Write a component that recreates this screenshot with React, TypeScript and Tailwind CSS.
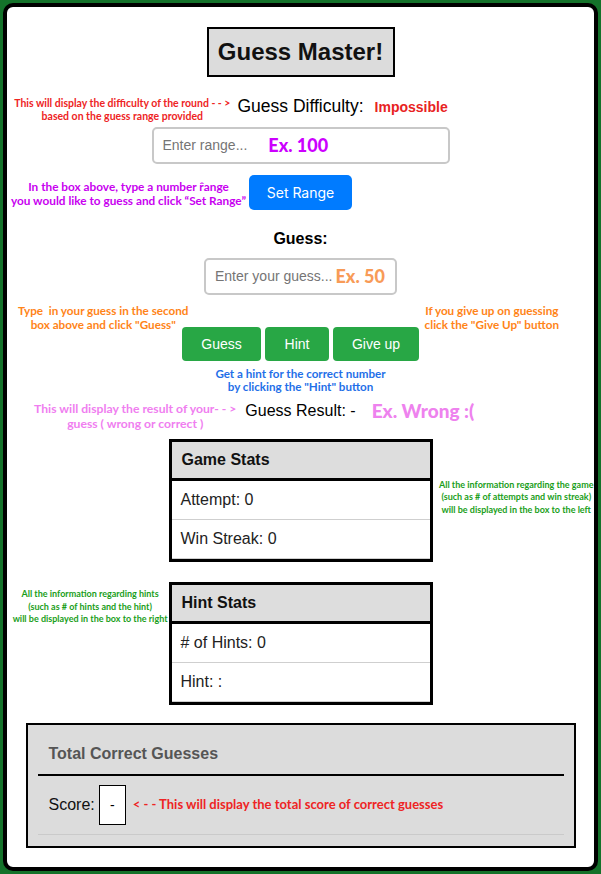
import React from "react";

const note = "font-['Lato',sans-serif] font-bold whitespace-nowrap text-center";
const arial = "font-['Liberation_Sans',Arial,sans-serif]";
const row3 = "grid w-full grid-cols-[minmax(0,1fr)_auto_minmax(0,1fr)]";

function StatBox({ title, rows }: { title: string; rows: string[] }) {
  return (
    <div className={`w-[264px] border-[3px] border-black bg-white ${arial}`}>
      <div className="flex h-[39px] items-center border-b-[3px] border-black bg-[#dddddd] px-[10px] text-[16px] font-bold text-[#111]">
        {title}
      </div>
      {rows.map((row) => (
        <div key={row} className="flex h-[39px] items-center border-b border-[#cfcfcf] px-[9px] text-[16px] text-[#222]">
          {row}
        </div>
      ))}
    </div>
  );
}

export default function App() {
  return (
    <div className="min-h-[874px] bg-[#14722a] p-[3px]">
      <div className={`flex h-[868px] flex-col items-center rounded-[10px] border-4 border-black bg-white ${arial}`}>
        <div className="mt-[20px] flex h-[50px] w-[188px] items-center justify-center border-2 border-black bg-[#dcdcdc] text-[24px] font-bold text-[#111]">
          Guess Master!
        </div>

        {/* difficulty */}
        <div className={`${row3} mt-[18px] items-start`}>
          <p className={`${note} mr-[7px] justify-self-end pt-[2px] text-[10.5px] leading-[13px] text-[#ee2424]`}>
            This will display the difficulty of the round - - &gt;
            <br />
            based on the guess range provided
          </p>
          <span className="whitespace-nowrap text-[17.5px] leading-[22px] text-black">Guess Difficulty:</span>
          <span className="ml-[11px] whitespace-nowrap pt-[3px] text-[14px] font-bold leading-[18px] text-[#e82222]">Impossible</span>
        </div>

        <div className="mt-[4px] flex h-[37px] w-[298px] items-center whitespace-nowrap rounded-[5px] border-2 border-[#c8c8c8] px-[9px]">
          <span className="text-[14px] text-[#757575]">Enter range...</span>
          <span className="ml-[21px] font-['Lato',sans-serif] text-[18px] font-black text-[#cc00ff]">Ex. 100</span>
        </div>

        {/* set range */}
        <div className={`${row3} mt-[11px] items-center`}>
          <p className={`${note} mr-[3px] justify-self-end pt-[3px] text-[11.8px] leading-[14px] text-[#c800f0]`}>
            In the box above, type a number r&#770;ange
            <br />
            you would like to guess and click “Set Range”
          </p>
          <button className="flex h-[35px] w-[103px] items-center justify-center rounded-[5px] bg-[#007bff] font-['Inter',sans-serif] text-[14px] text-white">
            Set Range
          </button>
          <span />
        </div>

        <p className="mt-[19px] text-[16px] font-bold leading-[20px] text-black">Guess:</p>

        <div className="mt-[9px] flex h-[37px] w-[193px] items-center whitespace-nowrap rounded-[5px] border-2 border-[#c8c8c8] px-[9px]">
          <span className="text-[14px] text-[#757575]">Enter your guess...</span>
          <span className="ml-[3px] font-['Lato',sans-serif] text-[18px] font-black text-[#f89b57]">Ex. 50</span>
        </div>

        {/* guess notes */}
        <div className="mt-[8px] flex w-full justify-between pl-[11px] pr-[35px]">
          <p className={`${note} text-[11.7px] leading-[14px] text-[#ff8418]`}>
            Type&nbsp; in your guess in the second
            <br />
            box above and click "Guess"
          </p>
          <p className={`${note} text-[11.7px] leading-[14px] text-[#ff8418]`}>
            If you give up on guessing
            <br />
            click the "Give Up" button
          </p>
        </div>

        <div className="-mt-[4px] flex gap-[4px] text-[14px] text-white">
          <button className="h-[34px] w-[79px] rounded-[4px] bg-[#28a745]">Guess</button>
          <button className="h-[34px] w-[64px] rounded-[4px] bg-[#28a745]">Hint</button>
          <button className="h-[34px] w-[86px] rounded-[4px] bg-[#28a745]">Give up</button>
        </div>

        <p className={`${note} mt-[6px] text-[11.6px] leading-[13px] text-[#1f6fe8]`}>
          Get a hint for the correct number
          <br />
          by clicking the "Hint" button
        </p>

        {/* result */}
        <div className={`${row3} mt-[8px] items-start`}>
          <p className={`${note} mr-[9px] justify-self-end text-[12.2px] leading-[15px] text-[#f07ef0]`}>
            This will display the result of your- - &gt;
            <br />
            guess ( wrong or correct )
          </p>
          <span className="whitespace-nowrap text-[16px] leading-[20px] text-black">Guess Result: -</span>
          <span className="ml-[16px] whitespace-nowrap font-['Lato',sans-serif] text-[19px] font-black leading-[20px] text-[#ee82ee]">Ex. Wrong :(</span>
        </div>

        {/* game stats */}
        <div className={`${row3} mt-[8px] items-center`}>
          <span />
          <StatBox title="Game Stats" rows={["Attempt: 0", "Win Streak: 0"]} />
          <p className={`${note} ml-[6px] pb-[6px] text-[9px] leading-[12.5px] text-[#1a9e1a]`}>
            All the information regarding the game
            <br />
            (such as # of attempts and win streak)
            <br />
            will be displayed in the box to the left
          </p>
        </div>

        {/* hint stats */}
        <div className={`${row3} mt-[20px] items-start`}>
          <p className={`${note} mr-[1px] justify-self-end pt-[6px] text-[9px] leading-[12.5px] text-[#1a9e1a]`}>
            All the information regarding hints
            <br />
            (such as # of hints and the hint)
            <br />
            will be displayed in the box to the right
          </p>
          <StatBox title="Hint Stats" rows={["# of Hints: 0", "Hint: :"]} />
          <span />
        </div>

        {/* total */}
        <div className="mt-[18px] w-[550px] border-2 border-black bg-[#dcdcdc] px-[10px] pb-[11px]">
          <div className="flex h-[51px] items-end border-b-2 border-black px-[11px] pb-[8px] text-[16px] font-bold text-[#555]">
            Total Correct Guesses
          </div>
          <div className="flex h-[59px] items-center border-b border-[#cacaca] px-[11px]">
            <span className="text-[16px] text-[#111]">Score:</span>
            <span className="ml-[4px] flex h-[40px] w-[27px] items-center justify-center border border-black bg-white text-[14px]">-</span>
            <span className={`${note} ml-[7px] text-[13px] text-[#ee2424]`}>
              &lt; - - This will display the total score of correct guesses
            </span>
          </div>
        </div>
      </div>
    </div>
  );
}
